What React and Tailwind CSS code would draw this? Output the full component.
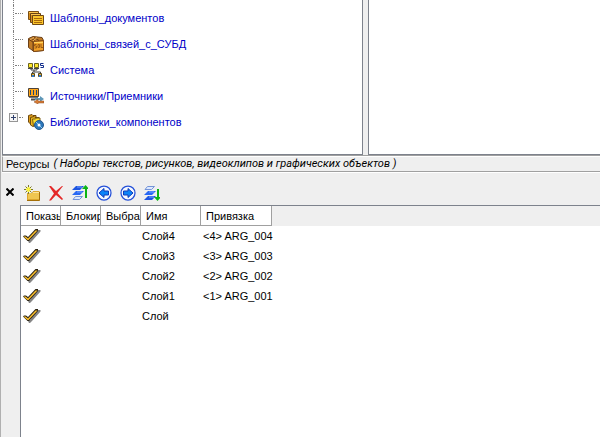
const TREE = [
    { label: "Шаблоны_документов", icon: DocsIcon },
    { label: "Шаблоны_связей_с_СУБД", icon: SqlIcon },
    { label: "Система", icon: SystemIcon },
    { label: "Источники/Приемники", icon: SourcesIcon },
    { label: "Библиотеки_компонентов", icon: LibraryIcon, expandable: true },
];

const LAYERS = [
    { name: "Слой4", binding: "<4> ARG_004" },
    { name: "Слой3", binding: "<3> ARG_003" },
    { name: "Слой2", binding: "<2> ARG_002" },
    { name: "Слой1", binding: "<1> ARG_001" },
    { name: "Слой", binding: "" },
];

const TOOLS = [
    { label: "Создать", icon: NewIcon },
    { label: "Удалить", icon: DeleteIcon },
    { label: "Выше", icon: LayersUpIcon },
    { label: "Назад", icon: BackIcon },
    { label: "Вперед", icon: ForwardIcon },
    { label: "Ниже", icon: LayersDownIcon },
];

const COLUMNS = ["Показы", "Блокир", "Выбра", "Имя", "Привязка"];

function Icon({ children }) {
    return (
        <svg width="16" height="16" viewBox="0 0 16 16" fill="none" className="block shrink-0" aria-hidden="true">
            {children}
        </svg>
    );
}

function DocsIcon() {
    return (
        <Icon>
            <path d="M.5 1.5h10v8H.5z" fill="#d98e1c" stroke="#7a4e14" />
            <path d="M1 2.500h9" stroke="#ffc850" />
            <path d="M2.500 3.500h10v9h-10z" fill="#d98e1c" stroke="#6b4412" />
            <path d="M3 4.500h9" stroke="#ffc850" />
            <path d="M4.500 5.500h11v9h-11z" fill="#fcc62a" stroke="#6f4814" />
            <path d="M6 8.500h8M6 10.500h8M6 12.500h8" stroke="#a8680c" />
        </Icon>
    );
}

function SqlIcon() {
    return (
        <Icon>
            <path d="M.5 2.500 5 .5l9 1 1.500 3v10L6 15.500.5 11.500z" fill="#c07a24" stroke="#6b4018" />
            <path d="M1 3.500 5 6v9M3 2l4 3M6 1.500l5 3" stroke="#6b3c14" />
            <path d="M2 3.500 6 1.500M5 5l4-3.500" stroke="#efb45c" />
            <path d="M5.500 5.500 15.500 4.500v10l-10 1z" fill="#f0a028" stroke="#7c4818" />
            <path d="M6 6.500h9" stroke="#ffd25c" />
            <path d="M8.500 8.500h-2v1.500h2v2h-2M10 8.500h1.500v3H10zM13 8v3.500h2" stroke="#9c5c14" />
        </Icon>
    );
}

function SystemIcon() {
    return (
        <Icon>
            <path d="M3 5v3h6V5M6 8v2m-1.500 2v-2h8v2" stroke="#444" />
            <path d="M.5 1.500h4v4h-4zM6.500 1.500h4v4h-4z" fill="#ffe82a" stroke="#6c6420" />
            <path d="M0 6.500h5M6 6.500h5" stroke="#444" />
            <path d="M3.500 11.500h3v3h-3zM10.500 11.500h3v3h-3z" fill="#f5b32a" stroke="#574820" />
            <path d="M4 13h2v2H4zM11 13h2v2h-2z" fill="#2b78d0" />
            <path d="M15.500 1.500h-3v2h3v2h-3" stroke="#102c8c" />
        </Icon>
    );
}

function SourcesIcon() {
    return (
        <Icon>
            <path d="M.5.5h10v8H.5z" fill="#ffa71c" stroke="#4c4238" />
            <path d="M2.500 2v5M5.500 2v5M8.500 2v5" stroke="#204878" />
            <path d="M1 9.500h9" stroke="#777" />
            <path d="M3 11.500h4" stroke="#55504a" strokeWidth="2" />
            <path d="M7 10h5V8l4 3-4 3v-2H7z" fill="#6098b8" />
            <path d="M16 13h-6v-2l-4 3 4 2v-1h6z" fill="#d87c34" stroke="#8c4c24" strokeWidth=".5" />
        </Icon>
    );
}

function LibraryIcon() {
    return (
        <Icon>
            <path d="M.5 1.500 4 .5l1 1h3v8l-5 1L.5 8z" fill="#e09c18" stroke="#6e4a10" />
            <path d="M2.500 11V3.500L6 2.500l1 1h4v6l-6 3z" fill="#edb81c" stroke="#6e4a10" />
            <path d="M4.500 5h3l1-1H12v8H5.500z" fill="#ffe02c" stroke="#7d5c14" />
            <circle cx="11" cy="11" r="3" stroke="#2c78bc" strokeWidth="3" fill="#fff" />
            <circle cx="11" cy="11" r="4.500" stroke="#23588c" />
            <path d="m8 8 2 2M12 12l2 2" stroke="#8ccaf4" />
        </Icon>
    );
}

function NewIcon() {
    return (
        <Icon>
            <path d="M3 8h5l1-2h6.500v9.500H3z" fill="#dca62c" />
            <path d="M4 8h11v6H4z" fill="#f0c650" />
            <path d="M9 7.500h6" stroke="#ffe69a" />
            <path d="M3 15.500h12.500V7" stroke="#a46f08" />
            <path d="M4.500 0v9M0 4.500h9M1.500 1.500l6 6M7.500 1.500l-6 6" stroke="#7c782c" />
            <path d="M4.500 2v5M2 4.500h5" stroke="#fff83c" strokeWidth="2" />
        </Icon>
    );
}

function DeleteIcon() {
    return (
        <Icon>
            <path d="M1 1h2l5 5 6-5h1L9.500 8l5.500 6-1 1-6-5-5 5.500H1L6 8.500z" fill="#e42828" />
        </Icon>
    );
}

function LayersUpIcon() {
    return (
        <Icon>
            <path d="M4 1h8L8 5H0z" fill="#1c54e0" />
            <path d="M4 6h8l-4 4H0z" fill="#2868f4" />
            <path d="M3.500 11.500h7l-3 3H1z" fill="#dce8ff" stroke="#7494d8" />
            <path d="M5 2h5M5 7h5" stroke="#78a4ff" />
            <path d="M13 13V4h-3l3.500-4L17 4h-2v9z" fill="#0cb414" />
        </Icon>
    );
}

function LayersDownIcon() {
    return (
        <Icon>
            <path d="M3.500 1.500h7l-3 3H1z" fill="#dce8ff" stroke="#7494d8" />
            <path d="M4 6h8l-4 4H0z" fill="#2868f4" />
            <path d="M4 11h8l-4 4H0z" fill="#1c54e0" />
            <path d="M5 7h5M5 12h5" stroke="#78a4ff" />
            <path d="M13 4v8h-3l3.500 4 3.500-4h-2V4z" fill="#0cb414" />
        </Icon>
    );
}

function BackIcon() {
    return (
        <Icon>
            <circle cx="8" cy="8" r="7" fill="#f4f8ff" stroke="#2450d8" strokeWidth="1.250" />
            <path d="m3 8 5-4.500v2.500h4.500v4H8v2.500z" fill="#0c84f8" stroke="#1038b8" />
        </Icon>
    );
}

function ForwardIcon() {
    return (
        <Icon>
            <circle cx="8" cy="8" r="7" fill="#f4f8ff" stroke="#2450d8" strokeWidth="1.250" />
            <path d="M13 8 8 3.500v2.500H3.500v4H8v2.500z" fill="#0c84f8" stroke="#1038b8" />
        </Icon>
    );
}

function CheckIcon() {
    return (
        <svg width="18" height="16" viewBox="0 0 18 16" className="block" role="img" aria-label="Показан">
            <path d="M4 11 7 12 14 2h3.500v1.500L9 13l-2 2H6z" fill="#858585" />
            <path d="M0 8.500 1 7.500h2L5 9 12.500 1H15v2L6 13H4.500z" fill="#2c2414" />
            <path d="M.5 8.500h2L5 10.500 12.500 2.500h2L5.500 12h-1z" fill="#ffc22c" />
        </svg>
    );
}

function TreeRow({ item }) {
    const Glyph = item.icon;
    return (
        <li className="flex h-[26px]">
            <div className="flex w-[25px] shrink-0">
                {item.expandable ? (
                    <>
                        <button
                            aria-label={`Развернуть ${item.label}`}
                            className="mt-1 ml-[6px] flex size-[9px] items-center justify-center border border-[#969696] bg-[#f6f6f6]"
                        >
                            <svg width="5" height="5" viewBox="0 0 5 5">
                                <path d="M0 2.500h5M2.500 0v5" stroke="#30406c" />
                            </svg>
                        </button>
                        <span className="mt-2 ml-px h-px w-1 border-t border-dotted border-[#808080]" />
                    </>
                ) : (
                    <>
                        <span className="ml-[10px] border-l border-dotted border-[#808080]" />
                        <span className="mt-2 ml-px h-px w-2 border-t border-dotted border-[#808080]" />
                    </>
                )}
            </div>
            <div className="flex items-center gap-[6px]">
                <Glyph />
                <a href="#" className="text-[#0000c8]">{item.label}</a>
            </div>
        </li>
    );
}

function LayerTable() {
    return (
        <table className="w-full table-fixed border-collapse text-left">
            <colgroup>
                <col className="w-[40px]" />
                <col className="w-[40px]" />
                <col className="w-[40px]" />
                <col className="w-[60px]" />
                <col className="w-[71px]" />
                <col />
            </colgroup>
            <thead>
                <tr className="h-5">
                    {COLUMNS.map((label) => (
                        <th key={label} className="p-0 font-normal">
                            <div className="h-5 overflow-hidden border-r border-b border-[#a0a0a0] bg-white pl-[5px] leading-5 whitespace-nowrap">
                                {label}
                            </div>
                        </th>
                    ))}
                    <td className="bg-[#efefef]" />
                </tr>
            </thead>
            <tbody>
                {LAYERS.map((layer) => (
                    <tr key={layer.name} className="h-5 whitespace-nowrap">
                        <td className="p-0 pl-[2px]">
                            <CheckIcon />
                        </td>
                        <td />
                        <td />
                        <td className="p-0 pl-px">{layer.name}</td>
                        <td className="p-0 pl-[2px]">{layer.binding}</td>
                        <td />
                    </tr>
                ))}
            </tbody>
        </table>
    );
}

export default function App() {
    return (
        <div className="flex min-h-screen flex-col border-l border-[#b0b0b0] bg-[#efefef] pl-px font-['Liberation_Sans',Arial,sans-serif] text-[11px] leading-4 text-black">
            <div className="flex gap-[5px]">
                <nav className="w-[361px] shrink-0 border-x border-b border-[#7d828c] bg-white">
                    <ul className="pt-[5px] pb-[19px]">
                        {/* the trunk carries on above the first visible node */}
                        <li className="-mt-[5px] ml-[10px] h-[5px] border-l border-dotted border-[#808080]" />
                        {TREE.map((item) => (
                            <TreeRow key={item.label} item={item} />
                        ))}
                    </ul>
                </nav>
                <section className="flex-1 border-b border-l border-[#7d828c] bg-white" />
            </div>

            <div className="border-t border-[#a0a0a0]">
                <div className="flex gap-1 border-t border-b border-l border-t-white border-b-[#a0a0a0] border-l-[#a0a0a0] pl-[3px] leading-[14px] whitespace-nowrap">
                    <span>Ресурсы</span>
                    <i className="font-['Roboto',sans-serif]">
                        ( Наборы текстов, рисунков, видеоклипов и графических объектов )
                    </i>
                </div>
            </div>

            <div className="flex flex-1 border-t border-white">
                <div className="w-[18px] shrink-0 pt-[15px]">
                    <button aria-label="Закрыть" className="ml-1 block">
                        <svg width="8" height="8" viewBox="0 0 8 8" className="block">
                            <path d="m.5.5 7 7M7.500.5l-7 7" stroke="#000" strokeWidth="2" />
                        </svg>
                    </button>
                </div>
                <main className="flex min-w-0 flex-1 flex-col">
                    <div className="flex gap-2 pt-3 pb-1 pl-1">
                        {TOOLS.map(({ label, icon: Glyph }) => (
                            <button key={label} aria-label={label} title={label}>
                                <Glyph />
                            </button>
                        ))}
                    </div>
                    <div className="flex-1 border-t border-l border-[#7d828c] bg-white">
                        <LayerTable />
                    </div>
                </main>
            </div>
        </div>
    );
}
